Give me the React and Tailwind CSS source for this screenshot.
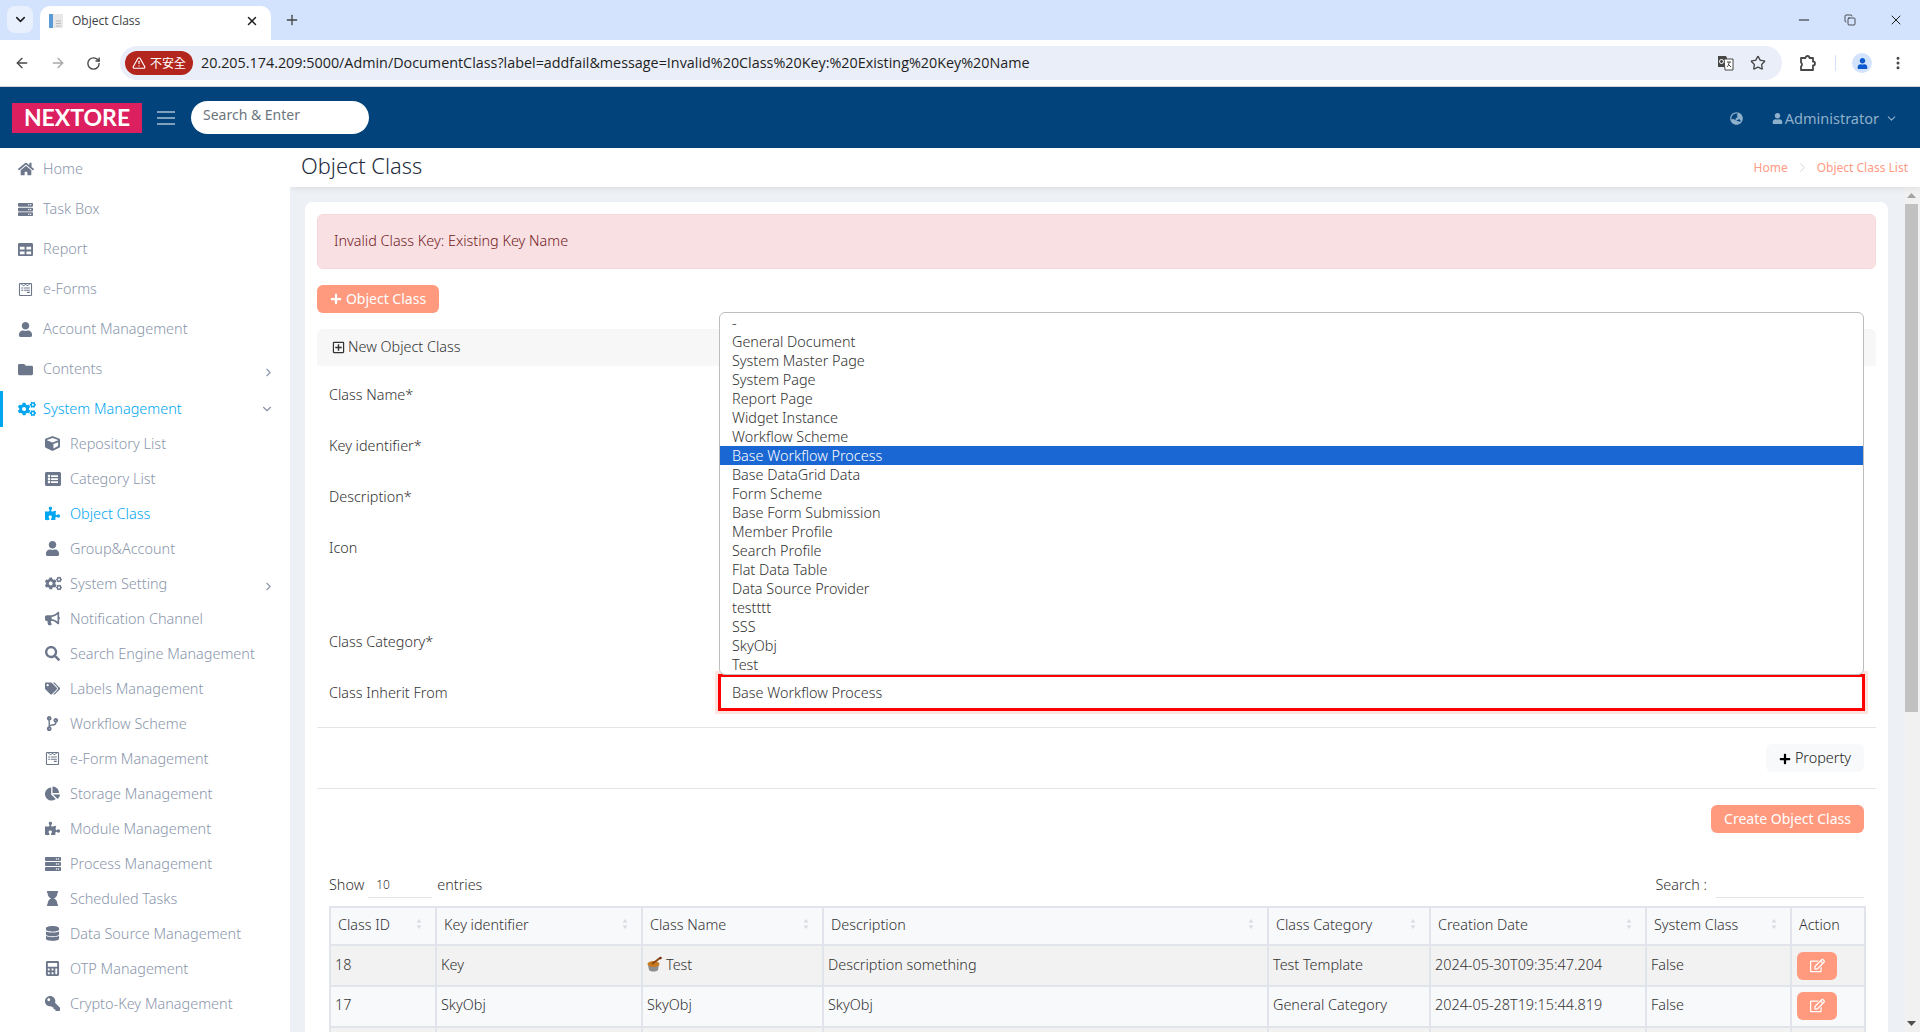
import {
    ArrowLeft,
    ArrowRight,
    RotateCw,
    Star,
    ChevronDown,
    ChevronRight,
    X,
    Plus,
    Minus,
    Copy,
    TriangleAlert,
    EllipsisVertical,
} from "lucide-react";
import {
    FaHome,
    FaServer,
    FaTable,
    FaWpforms,
    FaUser,
    FaFolder,
    FaCogs,
    FaCube,
    FaListAlt,
    FaPuzzlePiece,
    FaBullhorn,
    FaSearch,
    FaTags,
    FaCodeBranch,
    FaChartPie,
    FaHourglass,
    FaDatabase,
    FaCalculator,
    FaKey,
    FaPlus,
    FaRegPlusSquare,
    FaRegEdit,
    FaGlobeAsia,
} from "react-icons/fa";

const FlippedKey = (props) => <FaKey {...props} className="-scale-x-100" />;

const topItems = [
    { label: "Home", icon: FaHome, size: 16 },
    { label: "Task Box", icon: FaServer },
    { label: "Report", icon: FaTable },
    { label: "e-Forms", icon: FaWpforms },
    { label: "Account Management", icon: FaUser },
    { label: "Contents", icon: FaFolder, arrow: true },
];

const subItems = [
    { label: "Repository List", icon: FaCube },
    { label: "Category List", icon: FaListAlt, size: 16 },
    { label: "Object Class", icon: FaPuzzlePiece, active: true },
    { label: "Group&Account", icon: FaUser },
    { label: "System Setting", icon: FaCogs, size: 17, arrow: true },
    { label: "Notification Channel", icon: FaBullhorn },
    { label: "Search Engine Management", icon: FaSearch },
    { label: "Labels Management", icon: FaTags },
    { label: "Workflow Scheme", icon: FaCodeBranch },
    { label: "e-Form Management", icon: FaWpforms },
    { label: "Storage Management", icon: FaChartPie },
    { label: "Module Management", icon: FaPuzzlePiece },
    { label: "Process Management", icon: FaServer, size: 16 },
    { label: "Scheduled Tasks", icon: FaHourglass },
    { label: "Data Source Management", icon: FaDatabase },
    { label: "OTP Management", icon: FaCalculator },
    { label: "Crypto-Key Management", icon: FlippedKey },
];

const options = [
    "-",
    "General Document",
    "System Master Page",
    "System Page",
    "Report Page",
    "Widget Instance",
    "Workflow Scheme",
    "Base Workflow Process",
    "Base DataGrid Data",
    "Form Scheme",
    "Base Form Submission",
    "Member Profile",
    "Search Profile",
    "Flat Data Table",
    "Data Source Provider",
    "testttt",
    "SSS",
    "SkyObj",
    "Test",
];

const columns = [
    { label: "Class ID", width: "w-[106px]", sort: true },
    { label: "Key identifier", width: "w-[206px]", sort: true },
    { label: "Class Name", width: "w-[181px]", sort: true },
    { label: "Description", width: "w-[445px]", sort: true },
    { label: "Class Category", width: "w-[162px]", sort: true },
    { label: "Creation Date", width: "w-[216px]", sort: true },
    { label: "System Class", width: "w-[145px]", sort: true },
    { label: "Action", width: "w-[74px]" },
];

const rows = [
    { id: "18", key: "Key", name: "Test", desc: "Description something", category: "Test Template", date: "2024-05-30T09:35:47.204", system: "False", icon: true, bg: "bg-[#f2f2f2]", pad: "pb-[2px]", btn: "" },
    { id: "17", key: "SkyObj", name: "SkyObj", desc: "SkyObj", category: "General Category", date: "2024-05-28T19:15:44.819", system: "False", bg: "bg-[#f8f9fb]", pad: "pb-[4px]", btn: "pb-[2px]" },
];

function BrowserChrome() {
    return (
        <div className="font-['Open_Sans',sans-serif]">
            {/* tab strip */}
            <div className="flex h-[40px] items-end bg-[#d3e3fd] pl-[7px]">
                <div className="mb-[7px] flex h-[27px] w-[26px] items-center justify-center rounded-lg bg-[#e8f0fe]">
                    <ChevronDown size={15} strokeWidth={2.5} className="text-[#1f1f1f]" />
                </div>
                <div className="ml-[7px] flex h-[34px] w-[231px] items-center rounded-t-[10px] bg-white pb-[5px] pl-[8px] pr-[12px]">
                    <svg width="16" height="16" viewBox="0 0 16 16">
                        <rect x="1" y="1" width="4" height="14" fill="#5b9bd5" />
                        <rect x="5" y="1" width="10" height="14" fill="#e8e8e8" />
                        <path d="M8 8h5M8 10.5h5M8 13h5" stroke="#bbb" strokeWidth="1" />
                    </svg>
                    <span className="ml-[8px] flex-1 text-[12px] text-[#3c4043]">Object Class</span>
                    <X size={14} strokeWidth={2.5} className="text-[#1f1f1f]" />
                </div>
                <Plus size={16} strokeWidth={2} className="mb-[12px] ml-[13px] text-[#444]" />
                <div className="mb-[12px] ml-auto flex items-center gap-[32px] pr-[16px] text-[#1f1f1f]">
                    <Minus size={16} strokeWidth={1.5} />
                    <Copy size={12} strokeWidth={1.5} />
                    <X size={16} strokeWidth={1.5} />
                </div>
            </div>
            {/* toolbar */}
            <div className="flex h-[47px] items-center border-b border-[#d5d5d5] bg-white">
                <div className="flex w-[120px] items-center gap-[20px] pl-[14px]">
                    <ArrowLeft size={16} strokeWidth={2} className="text-[#474747]" />
                    <ArrowRight size={16} strokeWidth={2} className="text-[#a8a8a8]" />
                    <RotateCw size={15} strokeWidth={2.2} className="text-[#474747]" />
                </div>
                <div className="flex h-[34px] w-[1662px] items-center rounded-full bg-[#e9eef8] pl-[5px] pr-[16px]">
                    <div className="flex h-[24px] w-[68px] items-center justify-center gap-[4px] rounded-full bg-[#b3261e] text-white">
                        <TriangleAlert size={14} strokeWidth={2} />
                        <span className="font-['Noto_Sans_CJK_TC',sans-serif] text-[12px]">不安全</span>
                    </div>
                    <span className="ml-[8px] flex-1 pb-[1px] text-[14.35px] text-[#1f1f1f]">
                        20.205.174.209:5000/Admin/DocumentClass?label=addfail&amp;message=Invalid%20Class%20Key:%20Existing%20Key%20Name
                    </span>
                    <svg width="17" height="16" viewBox="0 0 17 16" className="mr-[16px]">
                        <path d="M1 1h8l1 2v9H1z" fill="#474747" />
                        <path d="M7 4h9v11H8z" fill="#fff" stroke="#474747" strokeWidth="1" />
                        <path d="M10 7h4M12 7c0 3-1 4-2 5M11 9l3 3" stroke="#474747" fill="none" />
                        <circle cx="4.5" cy="6.5" r="2" stroke="#fff" fill="none" />
                    </svg>
                    <Star size={16} strokeWidth={2} className="text-[#474747]" />
                </div>
                <svg width="17" height="17" viewBox="0 0 17 17" className="ml-[17px]">
                    <path d="M2 3h4.5a2 2 0 0 1 4 0H14v3.5a2 2 0 0 1 0 4V15H2v-3.5a2.5 2.5 0 0 0 0-4z" fill="none" stroke="#474747" strokeWidth="1.8" strokeLinejoin="round" />
                </svg>
                <div className="ml-[19px] h-[16px] w-[1px] bg-[#d3e3fd]"></div>
                <div className="ml-[16px] flex h-[20px] w-[20px] items-center justify-center rounded-full bg-[#d3e3fd]">
                    <FaUser size={11} className="text-[#0b57d0]" />
                </div>
                <EllipsisVertical size={16} strokeWidth={2.5} className="ml-[18px] text-[#474747]" />
            </div>
        </div>
    );
}

function TopBar() {
    return (
        <div className="flex h-[61px] items-center bg-[#01437a] pl-[12px] pr-[22px]">
            <div className="flex h-[30px] w-[130px] items-center justify-center bg-[#dc1f5e] font-['Lato',sans-serif] text-[23px] font-bold leading-none text-white">
                NEXTORE
            </div>
            <div className="ml-[15px] flex w-[18px] flex-col gap-[4px]">
                <div className="h-[2px] bg-[#7fa1bd]"></div>
                <div className="h-[2px] bg-[#7fa1bd]"></div>
                <div className="h-[2px] bg-[#7fa1bd]"></div>
            </div>
            <div className="ml-[16px] flex h-[33px] w-[178px] items-center rounded-full bg-white pb-[6px] pl-[12px] text-[14px] text-[#6c757d]">
                Search &amp; Enter
            </div>
            <div className="ml-auto flex items-center pt-[2px] text-[14.5px] text-[#8fb0cb]">
                <FaGlobeAsia size={13} />
                <FaUser size={11} className="ml-[29px]" />
                <span className="ml-[2px]">Administrator</span>
                <ChevronDown size={13} strokeWidth={2} className="ml-[6px]" />
            </div>
        </div>
    );
}

function SideItem({ item, sub }) {
    const Icon = item.icon;
    return (
        <div
            className={`flex items-center ${sub ? "h-[35px] pl-[45px]" : "h-[40px] pl-[18px] pt-[2px]"} ${
                item.active ? "text-[#00a6f0]" : "text-[#8a96ab]"
            }`}
        >
            <span className={`flex w-[25px] shrink-0 ${item.active ? "text-[#00a6f0]" : "text-[#6d778c]"}`}>
                <Icon size={item.size || 15} />
            </span>
            <span className="flex-1 text-[14.45px] font-light">{item.label}</span>
            {item.arrow && <ChevronRight size={13} className="mr-[15px] mt-[6px] text-[#8a96ab]" />}
        </div>
    );
}

function Sidebar() {
    return (
        <aside className="h-[884px] w-[290px] shrink-0 overflow-hidden bg-white">
            {topItems.map((item) => (
                <SideItem key={item.label} item={item} />
            ))}
            <div className="relative flex h-[38px] items-center pl-[18px] pt-[3px] text-[#00a6f0]">
                <div className="absolute left-0 top-[3px] h-[36px] w-[3px] bg-[#00a6f0]"></div>
                <span className="flex w-[25px] shrink-0">
                    <FaCogs size={18} />
                </span>
                <span className="flex-1 text-[14.45px] font-light">System Management</span>
                <ChevronDown size={14} className="mr-[16px] text-[#8a96ab]" />
            </div>
            {subItems.map((item) => (
                <SideItem key={item.label} item={item} sub />
            ))}
        </aside>
    );
}

function FormRow({ label, className = "h-[51px] items-center", children }) {
    return (
        <div className={`flex pl-[12px] ${className}`}>
            <label className="w-[389px] shrink-0 text-[14.4px] font-light text-[#333]">{label}</label>
            {children}
        </div>
    );
}

function SortArrows() {
    return (
        <svg width="6" height="12" viewBox="0 0 6 12" className="shrink-0">
            <path d="M3 1l2.5 3.5h-5z M3 11L.5 7.5h5z" fill="#d8dbe0" />
        </svg>
    );
}

function Mortar() {
    return (
        <svg width="15" height="16" viewBox="0 0 15 16" className="mr-[4px] shrink-0">
            <path d="M1 9c2 1 8 1 11-1l-1 6c-2 2-7 2-9 0z" fill="#8d8d8d" />
            <ellipse cx="6.5" cy="8" rx="6" ry="3" fill="#c9791f" />
            <path d="M5 8l8-6" stroke="#8a4a12" strokeWidth="2" />
            <circle cx="13.5" cy="2" r="1.3" fill="#7a2a14" />
        </svg>
    );
}

function ClassTable() {
    return (
        <table className="mt-[8px] w-[1535px] table-fixed border-collapse text-[14.4px] font-light text-[#333]">
            <thead>
                <tr className="h-[38px] bg-[#f8f9fb]">
                    {columns.map((col) => (
                        <th key={col.label} className={`${col.width} border-2 border-[#e1e4ea] pb-[3px] pl-[7px] pr-[13px] text-left font-light`}>
                            <div className="flex items-center justify-between">
                                <span>{col.label}</span>
                                {col.sort && <SortArrows />}
                            </div>
                        </th>
                    ))}
                </tr>
            </thead>
            <tbody>
                {rows.map((row) => (
                    <tr key={row.id} className={`h-[41px] ${row.bg}`}>
                        <td className={`border-2 border-[#e1e4ea] pl-[4px] ${row.pad}`}>{row.id}</td>
                        <td className={`border-2 border-[#e1e4ea] pl-[4px] ${row.pad}`}>{row.key}</td>
                        <td className={`border-2 border-[#e1e4ea] pl-[4px] ${row.pad}`}>
                            <div className="flex items-center">
                                {row.icon && <Mortar />}
                                {row.name}
                            </div>
                        </td>
                        <td className={`border-2 border-[#e1e4ea] pl-[4px] ${row.pad}`}>{row.desc}</td>
                        <td className={`border-2 border-[#e1e4ea] pl-[4px] ${row.pad}`}>{row.category}</td>
                        <td className={`border-2 border-[#e1e4ea] pl-[4px] ${row.pad}`}>{row.date}</td>
                        <td className={`border-2 border-[#e1e4ea] pl-[4px] ${row.pad}`}>{row.system}</td>
                        <td className={`border-2 border-[#e1e4ea] pl-[5px] ${row.btn}`}>
                            <div className="flex h-[28px] w-[40px] items-center justify-center rounded-md bg-[#ff9a7e] text-white">
                                <FaRegEdit size={15} />
                            </div>
                        </td>
                    </tr>
                ))}
                <tr className="h-[41px] bg-[#f2f2f2]">
                    {columns.map((col) => (
                        <td key={col.label} className="border-2 border-[#e1e4ea]"></td>
                    ))}
                </tr>
            </tbody>
        </table>
    );
}

function InheritSelect() {
    return (
        <div className="relative flex h-[37px] w-[1147px] items-center border-[3px] border-[#ff0000] pl-[11px] text-[14.4px] font-light text-[#333] shadow-[0_0_0_3px_#ffe3de]">
            Base Workflow Process
            {/* open listbox */}
            <div className="absolute bottom-[33px] left-[-2px] z-10 h-[363px] w-[1145px] rounded-md border border-[#bdbdbd] bg-white text-[14.4px] text-[#333]">
                {options.map((opt) => (
                    <div
                        key={opt}
                        className={`flex h-[19px] items-center pl-[12px] ${opt === "Base Workflow Process" ? "bg-[#1a66d2] text-white" : ""}`}
                    >
                        {opt}
                    </div>
                ))}
            </div>
        </div>
    );
}

function Card() {
    return (
        <div className="rounded-lg bg-white px-[12px] pt-[12px]">
            <div className="flex h-[55px] items-center rounded-md border border-[#f8d7da] bg-[#f9e0e3] pb-[2px] pl-[16px] text-[14.4px] font-light text-[#721c24]">
                Invalid Class Key: Existing Key Name
            </div>
            <div className="mt-[16px] flex h-[28px] w-[122px] items-center justify-center gap-[4px] rounded-md bg-[#ff9a7e] pb-[2px] text-[14px] text-white">
                <FaPlus size={12} className="mt-[2px]" />
                Object Class
            </div>
            <div className="mt-[16px] flex h-[37px] items-center rounded-t-md bg-[#f7f7f7] pb-[2px] pl-[15px] text-[14.4px] font-light text-[#333]">
                <FaRegPlusSquare size={13} className="mr-[3px] mt-[2px]" />
                New Object Class
            </div>
            <div className="pt-[3px]">
                <FormRow label="Class Name*" />
                <FormRow label="Key identifier*" />
                <FormRow label="Description*" />
                <FormRow label="Icon" className="h-[94px] items-start pt-[15px]" />
                <FormRow label="Class Category*" />
                <FormRow label="Class Inherit From">
                    <InheritSelect />
                </FormRow>
            </div>
            <div className="mt-[9px] border-t border-[#e3e5e8] pb-[16px] pr-[12px] pt-[16px]">
                <div className="ml-auto flex h-[28px] w-[98px] items-center justify-center gap-[4px] rounded-md bg-[#f8f9fa] text-[14.4px] font-light text-[#222]">
                    <FaPlus size={12} className="mt-[2px] text-black" />
                    Property
                </div>
            </div>
            <div className="border-t border-[#e3e5e8] pr-[12px] pt-[16px]">
                <div className="ml-auto flex h-[28px] w-[153px] items-center justify-center rounded-md bg-[#ff9a7e] pb-[2px] text-[14px] text-white">
                    Create Object Class
                </div>
            </div>
            <div className="mt-[39px] flex h-[26px] items-center px-[12px] text-[14.4px] font-light text-[#333]">
                <span>Show</span>
                <div className="ml-[4px] flex h-[26px] w-[64px] items-center border-b border-[#e3e5e8] pl-[8px] text-[12px]">10</div>
                <span className="ml-[5px]">entries</span>
                <span className="ml-auto">Search :</span>
                <div className="ml-[9px] h-[26px] w-[148px] border-b border-[#e3e5e8]"></div>
            </div>
            <div className="pl-[12px]">
                <ClassTable />
            </div>
        </div>
    );
}

export default function App() {
    return (
        <div className="h-[1032px] w-[1920px] overflow-hidden bg-[#edf1f5] font-['Noto_Sans',sans-serif]">
            <BrowserChrome />
            <TopBar />
            <div className="flex h-[884px]">
                <Sidebar />
                <main className="flex min-w-0 flex-1 flex-col overflow-hidden">
                    <div className="relative z-10 flex h-[39px] shrink-0 items-center justify-between bg-white pl-[11px] pr-[12px] shadow-[0_2px_6px_rgba(0,0,0,0.07)]">
                        <h1 className="pb-[2px] text-[21.8px] font-light text-[#1f2d3d]">Object Class</h1>
                        <div className="flex items-center text-[12px] text-[#ff9a85]">
                            Home
                            <ChevronRight size={15} strokeWidth={1.5} className="mx-[7px] text-[#ccd3da]" />
                            Object Class List
                        </div>
                    </div>
                    <div className="flex min-h-0 flex-1">
                        <div className="min-w-0 flex-1 overflow-hidden pl-[15px] pr-[17px] pt-[15px]">
                            <Card />
                        </div>
                        <div className="flex w-[15px] shrink-0 flex-col bg-[#f1f1f1] pr-[2px]">
                            <div className="flex h-[17px] shrink-0 items-center justify-center">
                                <svg width="9" height="5" viewBox="0 0 9 5"><path d="M4.5 0L9 5H0z" fill="#a3a3a3" /></svg>
                            </div>
                            <div className="h-[508px] bg-[#c1c1c1]"></div>
                            <div className="mt-auto flex h-[17px] shrink-0 items-center justify-center">
                                <svg width="9" height="5" viewBox="0 0 9 5"><path d="M4.5 5L9 0H0z" fill="#505050" /></svg>
                            </div>
                        </div>
                    </div>
                </main>
            </div>
        </div>
    );
}
